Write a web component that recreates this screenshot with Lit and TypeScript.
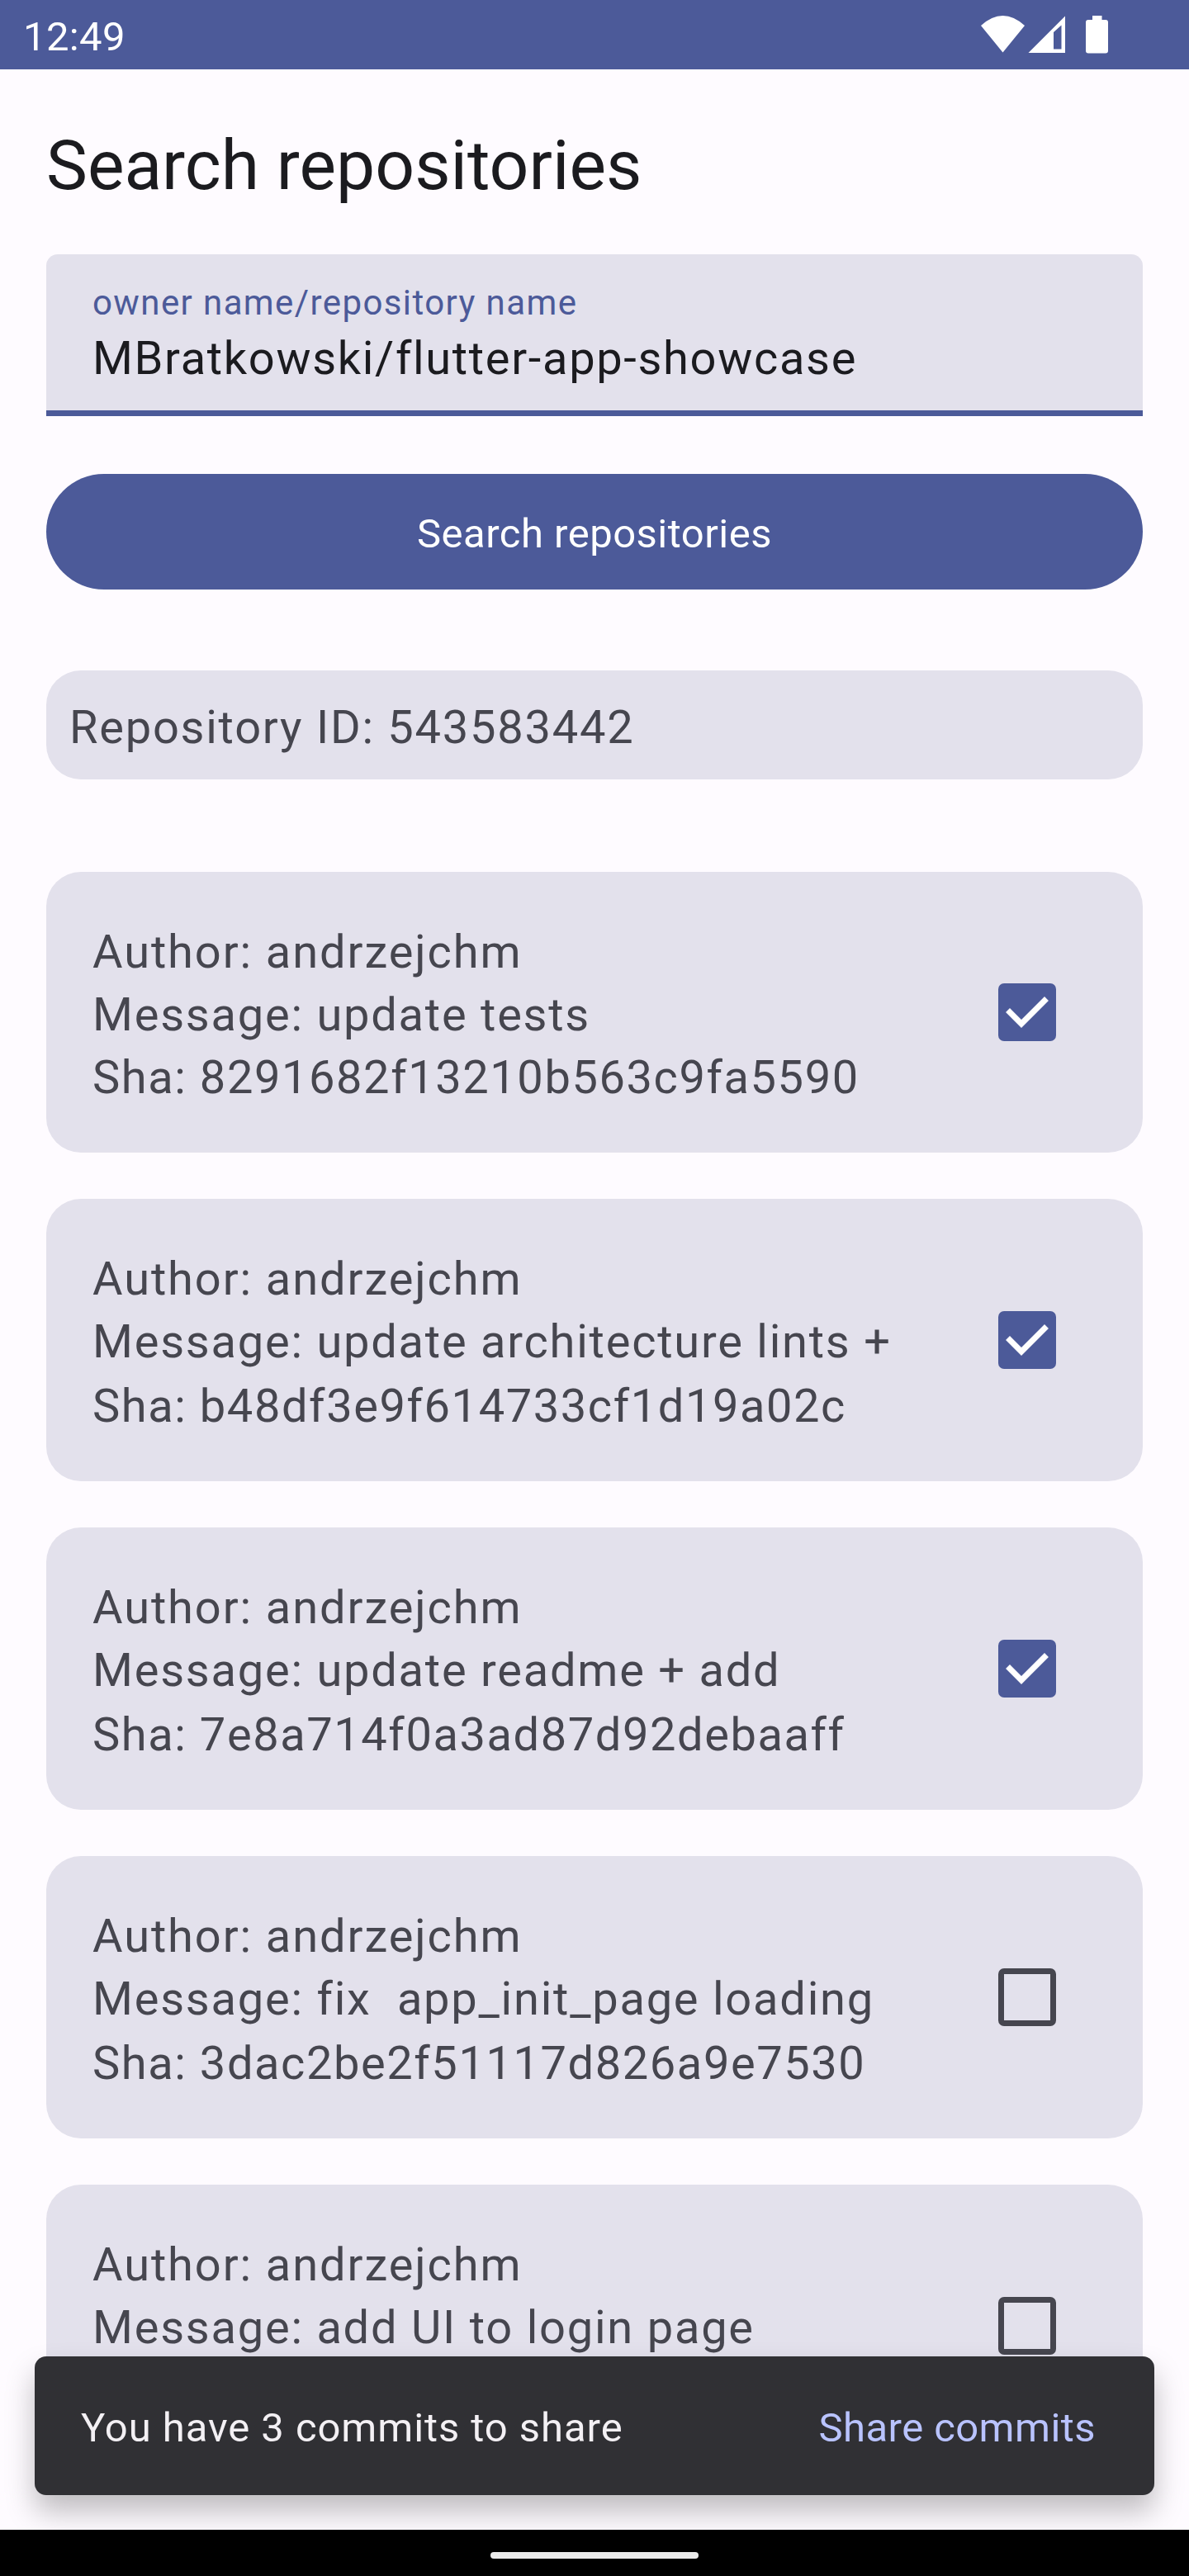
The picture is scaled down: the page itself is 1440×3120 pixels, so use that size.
import { LitElement, html, css, svg, nothing } from "lit";
import { customElement, property } from "lit/decorators.js";

interface Commit {
  author: string;
  message: string;
  sha?: string;
  selected: boolean;
}

const COMMITS: Commit[] = [
  { author: "andrzejchm", message: "update tests", sha: "8291682f13210b563c9fa5590", selected: true },
  { author: "andrzejchm", message: "update architecture lints +", sha: "b48df3e9f614733cf1d19a02c", selected: true },
  { author: "andrzejchm", message: "update readme + add", sha: "7e8a714f0a3ad87d92debaaff", selected: true },
  { author: "andrzejchm", message: "fix  app_init_page loading", sha: "3dac2be2f51117d826a9e7530", selected: false },
  { author: "andrzejchm", message: "add UI to login page", selected: false },
];

@customElement("check-box")
class CheckBox extends LitElement {
  @property({ type: Boolean }) checked = false;

  static styles = css`
    :host { display: block; flex: none; width: 70px; height: 70px; }
    svg { display: block; }
  `;

  render() {
    return html`<svg width="70" height="70" viewBox="0 0 70 70">
      ${this.checked
        ? svg`<rect width="70" height="70" rx="7" fill="#4c5a99"></rect>
            <path d="M14 35 L28 49 L56 21" fill="none" stroke="#fff" stroke-width="7" stroke-linecap="square"></path>`
        : svg`<path fill="#46464f" fill-rule="evenodd" d="M7 0H63A7 7 0 0 1 70 7V63A7 7 0 0 1 63 70H7A7 7 0 0 1 0 63V7A7 7 0 0 1 7 0ZM7 7V63H63V7Z"></path>`}
    </svg>`;
  }
}

@customElement("commit-card")
class CommitCard extends LitElement {
  @property({ attribute: false }) commit!: Commit;

  static styles = css`
    :host { display: block; flex: none; }
    .card {
      box-sizing: border-box; height: 342px; padding: 0 105px 0 56px;
      display: flex; align-items: center; justify-content: space-between;
      background: #e3e1ec; border-radius: 42px;
    }
    :host(.first) .card { height: 340px; }
    .lines { align-self: flex-start; padding-top: 59px; }
    .line {
      font-size: 56px; line-height: 76px;
      color: #46464f; white-space: pre;
    }
    .author { letter-spacing: 1.9px; }
    .message { letter-spacing: 1.77px; }
    .sha { letter-spacing: 1.57px; margin-top: 2px; }
    :host(.first) .sha { margin-top: 0; }
  `;

  render() {
    const c = this.commit;
    return html`<div class="card">
      <div class="lines">
        <div class="line author">Author: ${c.author}</div>
        <div class="line message">Message: ${c.message}</div>
        ${c.sha ? html`<div class="line sha">Sha: ${c.sha}</div>` : nothing}
      </div>
      <check-box ?checked=${c.selected}></check-box>
    </div>`;
  }
}

@customElement("app-root")
class AppRoot extends LitElement {
  static styles = css`
    :host { display: block; font-family: Roboto, sans-serif; }
    .screen {
      position: relative; width: 1440px; height: 3120px; overflow: hidden;
      display: flex; flex-direction: column; background: #fefbff;
    }
    .status {
      flex: none; height: 84px; background: #4c5a99; color: #fff;
      display: flex; justify-content: space-between;
    }
    .clock { padding-left: 28px; font-size: 49px; line-height: 89px; letter-spacing: 0.35px; }
    .content {
      flex: 1; min-height: 0; overflow: hidden; padding: 56px 56px 0;
      display: flex; flex-direction: column;
    }
    .title { flex: none; height: 112px; font-size: 84px; line-height: 121px; color: #1b1b1f; }
    .field {
      flex: none; box-sizing: border-box; height: 196px; margin-top: 56px; padding: 28px 56px 0;
      background: #e3e1ec; border-bottom: 7px solid #4c5a99; border-radius: 14px 14px 0 0;
      display: flex; flex-direction: column;
    }
    .label { height: 60px; font-size: 42px; line-height: 61px; letter-spacing: 1.4px; color: #4c5a99; }
    .value { font-size: 56px; line-height: 77px; letter-spacing: 1.67px; color: #1b1b1f; }
    .search {
      flex: none; height: 140px; margin-top: 70px; border: 0; padding: 4px 0 0; border-radius: 70px;
      background: #4c5a99; color: #fff; font: 400 49px Roboto, sans-serif; letter-spacing: 0.48px;
    }
    .repo {
      flex: none; box-sizing: border-box; height: 132px; margin-top: 98px; padding: 0 28px;
      border-radius: 42px; background: #e3e1ec; color: #46464f;
      font-size: 56px; line-height: 138px; letter-spacing: 1.75px;
    }
    .list { margin-top: 112px; display: flex; flex-direction: column; gap: 56px; }
    .snackbar {
      position: absolute; left: 42px; right: 42px; top: 2854px; height: 168px; box-sizing: border-box;
      padding: 5px 71px 0 56px; border-radius: 14px; background: #303034; color: #f3f0f4;
      box-shadow: 0 20px 35px rgba(0, 0, 0, 0.25);
      display: flex; align-items: center; justify-content: space-between;
      font-size: 49px; line-height: 70px;
    }
    .note { letter-spacing: 0.94px; }
    .action { color: #b9c3ff; letter-spacing: 0.44px; }
    .nav {
      position: relative; flex: none; height: 56px; background: #000;
      display: flex; align-items: center; justify-content: center;
    }
    .handle { width: 252px; height: 8px; margin-top: 6px; border-radius: 4px; background: #ebebeb; }
  `;

  render() {
    const count = COMMITS.filter((c) => c.selected).length;
    return html`<div class="screen">
      <div class="status">
        <div class="clock">12:49</div>
        <svg width="280" height="84" viewBox="0 0 280 84" fill="#fff">
          <path d="M28 31Q54.500 7 81 31L54.500 63.500Z"></path>
          <path fill-rule="evenodd" d="M85.500 64L130 19.500V64ZM116 39V59.500H125.500V30.500Z"></path>
          <path d="M163 24V19H174.500V24H179A3 3 0 0 1 182 27V61.500A3 3 0 0 1 179 64.500H158A3 3 0 0 1 155 61.500V27A3 3 0 0 1 158 24Z"></path>
        </svg>
      </div>
      <div class="content">
        <div class="title">Search repositories</div>
        <div class="field">
          <div class="label">owner name/repository name</div>
          <div class="value">MBratkowski/flutter-app-showcase</div>
        </div>
        <button class="search">Search repositories</button>
        <div class="repo">Repository ID: 543583442</div>
        <div class="list">
          ${COMMITS.map((c, i) => html`<commit-card class=${i === 0 ? "first" : ""} .commit=${c}></commit-card>`)}
        </div>
      </div>
      <div class="snackbar">
        <div class="note">You have ${count} commits to share</div>
        <div class="action">Share commits</div>
      </div>
      <div class="nav"><div class="handle"></div></div>
    </div>`;
  }
}
